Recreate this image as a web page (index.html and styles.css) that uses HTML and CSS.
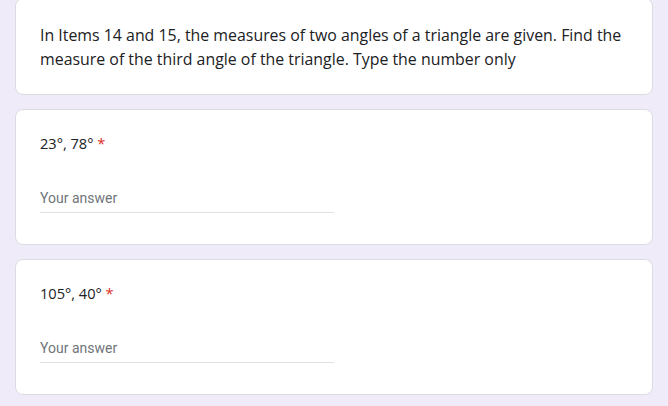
FILE: index.html
```html
<!DOCTYPE html>
<html>
<head>
<meta charset="utf-8">
<link rel="stylesheet" href="styles.css">
</head>
<body>
<div class="page">
  <div class="card desc-card">
    <p class="desc">In Items 14 and 15, the measures of two angles of a triangle are given. Find the measure of the third angle of the triangle. Type the number only</p>
  </div>
  <div class="card question">
    <div class="title">23°, 78° <span class="req">*</span></div>
    <div class="answer"><span class="placeholder">Your answer</span></div>
  </div>
  <div class="card question">
    <div class="title">105°, 40° <span class="req">*</span></div>
    <div class="answer"><span class="placeholder">Your answer</span></div>
  </div>
</div>
</body>
</html>
```

FILE: styles.css
```css
html, body {
  margin: 0;
  padding: 0;
  background: #f0ebf8;
}
.page {
  display: flex;
  flex-direction: column;
  gap: 14px;
  padding: 0 15px 0 15px;
  margin-top: -2px;
}
.card {
  background: #fff;
  border: 1px solid #dadce0;
  border-radius: 8px;
  padding: 24px;
}
.desc-card {
  padding-bottom: 23px;
}
.desc {
  margin: 0;
  font-family: "Open Sans", sans-serif;
  font-size: 15.9px;
  line-height: 24px;
  color: #202124;
}
.question {
  display: flex;
  flex-direction: column;
  padding-top: 21px;
  padding-bottom: 31px;
}
.title {
  font-family: "Open Sans", sans-serif;
  font-size: 14.6px;
  line-height: 24px;
  color: #202124;
}
.req {
  color: #d93025;
}
.answer {
  margin-top: 33px;
  width: 50%;
  border-bottom: 1px solid #e0e0e0;
  padding-bottom: 4px;
  font-family: Roboto, sans-serif;
  font-size: 14px;
  line-height: 20px;
}
.placeholder {
  color: #70757a;
}
```
